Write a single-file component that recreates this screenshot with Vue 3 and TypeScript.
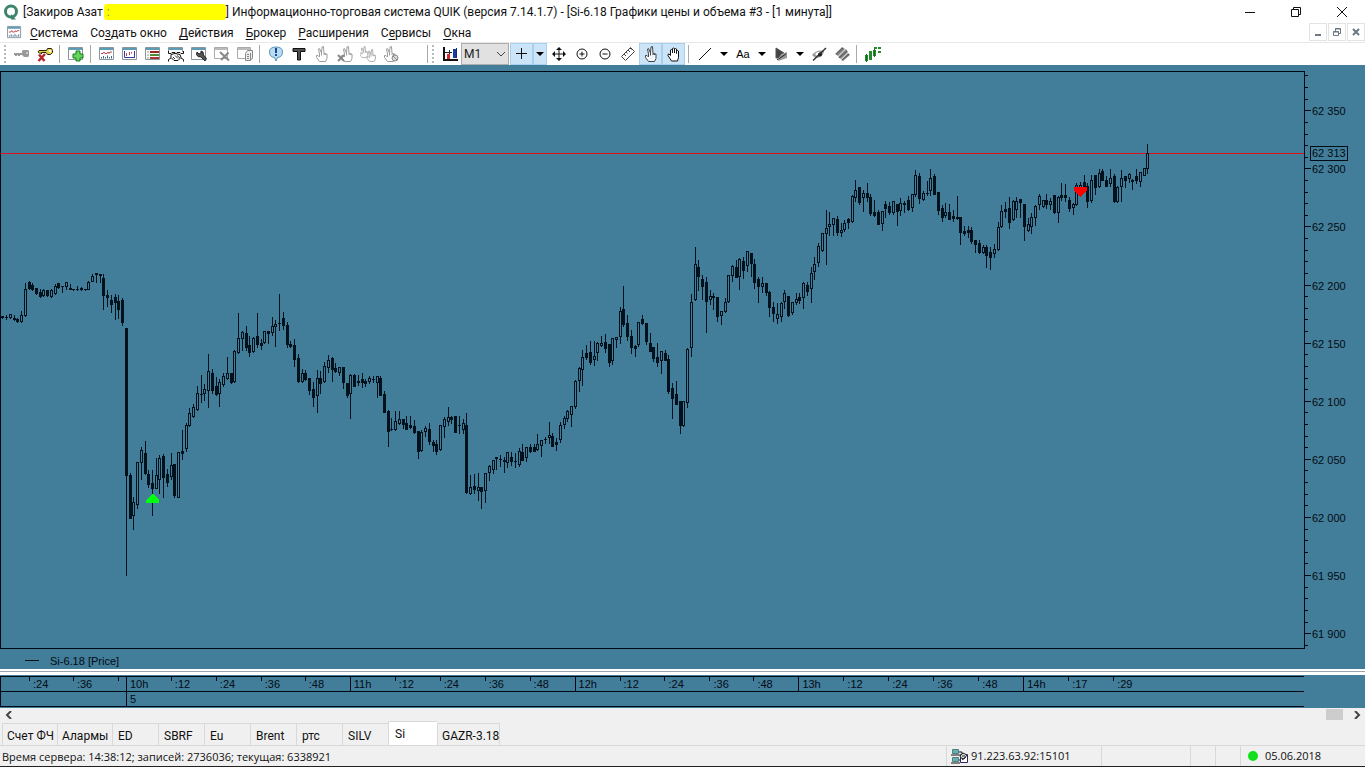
<script setup lang="ts">
import { ref } from 'vue'

interface MenuItem { before: string; key: string; after: string }
interface ToolItem { kind: 'button' | 'arrow' | 'sep' | 'grip' | 'select' | 'space'; icon?: string; label?: string; on?: boolean }

const menu: MenuItem[] = [
  { before: '', key: 'С', after: 'истема' },
  { before: 'Со', key: 'з', after: 'дать окно' },
  { before: '', key: 'Д', after: 'ействия' },
  { before: '', key: 'Б', after: 'рокер' },
  { before: '', key: 'Р', after: 'асширения' },
  { before: 'С', key: 'е', after: 'рвисы' },
  { before: '', key: 'О', after: 'кна' },
]

const hand = '<path d="M5.500 15.500L2.500 11.500V9.500H4L5.500 11V8L4.500 3L5.500 2.500L7.500 7L8 1L9.500 .5L10 7.500V9M10 7.500H11.500V9M11.500 8H13V12.500L11.500 15.500H5.500M7.500 7V9.500"/>'
const frame = '<path d="M.5 1.500H14.500V13.500H.5Z" fill="#fff" stroke="#8896a0"/><path d="M1 2H14V4H1Z" fill="#5c9db5"/>'
const greyFrame = '<path d="M.5 1.500H13.500V12.500H.5Z" fill="#fff" stroke="#aaa"/><path d="M1 2H13V4H1Z" fill="#bbb"/>'
const quoteIcon = frame + '<path d="M2 7.500H4L5 6L6 7.500H8L9 6L10 7.500L11 6H13" fill="none" stroke="#b4434c"/><path d="M2.500 12.500V11M4.500 12.500V10M6.500 12.500V11M8.500 12.500V9.500M10.500 12.500V11M12.500 12.500V10" fill="none" stroke="#41678a"/>'

const icons: Record<string, string> = {
  key: '<path d="M9 4H14L15 5V10L14 11H10L8 9H6V10H4V9H3V10H1V9H0V7H8V5Z" fill="#9a9a9a"/><path d="M12 6H14V8H12Z" fill="#c8c8c8"/>',
  keyOff: '<g stroke="#282400" stroke-width="1" fill="#e6d24c"><path d="M10.500 2.500H14.500L15.500 4.500V6.500L13.500 8.500H10.500L9 6.500H4.500V8L3.500 7H2.500L1 6L2 4.500H9.500Z"/></g><path d="M12 4H14V6H12Z" fill="#fff"/><path d="M2 8.500L7.500 15M8 8L1.500 15" stroke="#b7242b" stroke-width="2.500"/>',
  add: frame + '<path d="M8 5H12V8H15V12H12V15H8V12H5V8H8Z" fill="#65d45a" stroke="#147c1b"/>',
  quote: quoteIcon,
  chart: frame + '<path d="M2.500 5V11.500H13M12.500 11V5" stroke="#3838a4" fill="none"/><path d="M4.500 7V10M7.500 6V9M9.500 7.500V6" stroke="#bd4058"/>',
  table: frame + '<path d="M5 5H14V7H5Z" fill="#9c2620"/><path d="M5 8H14V10H5Z" fill="#4c8d34"/><path d="M5 11H14V13H5Z" fill="#a53730"/><path d="M2 6H4M2 9H4M2 12H4" stroke="#999"/>',
  deal: '<path d="M.5 6V1.500H14.500V6" fill="#fff" stroke="#8896a0"/><path d="M1 2H14V4H1Z" fill="#5c9db5"/><path d="M.5 5V7.500H3L4 6.500H7L8 7.500L9 6.500H12L13 7.500H15.500V5M.5 15.500V13.500L3 12M15.500 15.500V13.500L13 12" stroke="#111" fill="none"/><path d="M3 8.500L7 7.500L12 8.500L13 11.500L10 14.500H6L3 11.500Z" fill="#fff" stroke="#111"/><path d="M5 11L7 13M7 9.500L10 12.500M9 9.500L12 12" stroke="#333"/>',
  tool: frame + '<path d="M6 6L8 8L10 7V5L12 6L12.500 9L15.500 12.500L14 15L10 11L7 10.500L5.500 8.500Z" fill="#555" stroke="#222"/>',
  drop: greyFrame + '<path d="M6 6L15 14.500M14.500 6.500L7 14" stroke="#888" stroke-width="2"/>',
  copy: greyFrame + '<path d="M8.500 7.500L10.500 4.500H15.500V12L13.500 14.500H8.500Z" fill="#eee" stroke="#888"/><path d="M13.500 7V14M10 8.500H12M10 10.500H12M10 12.500H12" stroke="#888"/>',
  alert: '<path d="M8 1Q14.500 1 14.500 6T9.500 11.500L8 15L6.500 11.500Q1.500 11 1.500 6T8 1Z" fill="#b9dcf0" stroke="#5596b9"/><path d="M7 2H9V7H7ZM7 8H9V10H7Z" fill="#154a94"/>',
  text: '<path d="M2 2.500H14V5.500H9.500V14H6.500V5.500H2Z" fill="#4f4f4f" stroke="#111"/>',
  handGrey: '<g fill="#fff" stroke="#9c9c9c">' + hand + '</g>',
  handX: '<g fill="#fff" stroke="#9c9c9c"><g transform="translate(2)">' + hand + '</g></g><path d="M1 9L7 15M7 9L1 15" stroke="#888" stroke-width="2"/>',
  hands: '<g fill="#fff" stroke="#9c9c9c"><g transform="translate(-2 0) scale(.75)">' + hand + '</g><g transform="translate(5 3) scale(.8)">' + hand + '</g></g>',
  handNo: '<g fill="#fff" stroke="#9c9c9c"><g transform="translate(-1)">' + hand + '</g></g><circle cx="12" cy="12" r="3" fill="#ddd" stroke="#888"/><path d="M10 10L14 14" stroke="#888"/>',
  bars: '<path d="M2 1V15M1 14H16" stroke="#111" stroke-width="2"/><path d="M5 8H8V13H5Z" fill="#d4262b"/><path d="M3 6.500H10M7.500 4V8" stroke="#222"/><path d="M11 3H14V12H11Z" fill="#1b3ca8"/><path d="M14.500 2V12" stroke="#112a80"/>',
  cross: '<path d="M2 7.500H13M7.500 2V13" stroke="#111"/>',
  move: '<path d="M3 8H13M8 3V13" stroke="#111" stroke-width="1"/><path d="M8 1L11 4H5ZM8 15L11 12H5ZM1 8L4 5V11ZM15 8L12 5V11Z" fill="#111"/>',
  plus: '<circle cx="8" cy="8" r="5" fill="#fff" stroke="#111"/><path d="M5.500 8H10.500M8 5.500V10.500" stroke="#111"/>',
  minus: '<circle cx="8" cy="8" r="5" fill="#fff" stroke="#111"/><path d="M5.500 8H10.500" stroke="#111"/>',
  ruler: '<path d="M1.500 10.500L10.500 1.500L14.500 5.500L5.500 14.500Z" fill="#fff" stroke="#444"/><path d="M4 8L6 10M6 6L7.500 7.500M8 4L10 6M10 2L11.500 3.500" stroke="#444"/>',
  handPoint: '<g fill="#f4f9fc" stroke="#444">' + hand + '</g>',
  handOpen: '<path d="M5.500 15L2 9.500Q1.500 8 3 8L4.500 9.500V4Q5.500 3 6.500 4V7V2.500Q7.500 1.500 8.500 2.500V7V3Q9.500 2 10.500 3V7.500V5Q11.500 4 12.500 5V11.500L11.500 15Z" fill="#fff" stroke="#111"/>',
  line: '<path d="M2 14L14 2" stroke="#111"/>',
  letters: '<text x="8" y="12" text-anchor="middle" font-family="Liberation Sans, sans-serif" font-size="11" fill="#000">Aa</text>',
  shape: '<path d="M3 2L11 7L5 12H3Z" fill="#444" stroke="#555"/><path d="M8 8L14 6V12L5 15Z" fill="#999"/><path d="M4 14L13 8" stroke="#222"/>',
  eye: '<path d="M1 9Q6 3 13 5Q12 12 5 12Q3 11 1 9Z" fill="#999"/><path d="M4 8Q7 5 9 6L6 10Z" fill="#fff"/><path d="M2 14.500L15 2" stroke="#333" stroke-width="1.500"/><circle cx="9" cy="8.500" r="2" fill="#222"/>',
  layers: '<path d="M1 8L8 1L11 3L4 10ZM4 11L12 3L14 6L7 13ZM7 14L14 7L16 9L9 15Z" fill="#858585"/><path d="M2 8L9 2M5 12L13 5M8 14L15 8" stroke="#555"/>',
  green: '<path d="M0 9H3V15H0ZM4 5H7V14H4ZM8 4H11V10H8ZM9 1H12V3H9ZM13 1H16V3H13ZM13 5H16V7H13Z" fill="#238b2b"/><path d="M1.500 8V16M9.500 3V11" stroke="#126b1a"/>',
}

const b = (icon: string, label: string, on = false): ToolItem => ({ kind: 'button', icon, label, on })
const sep: ToolItem = { kind: 'sep' }
const tools: ToolItem[] = [
  { kind: 'grip' }, b('key', 'Подключить'), b('keyOff', 'Отключить'), sep, b('add', 'Создать окно'), sep,
  b('quote', 'Котировки'), b('chart', 'График'), b('table', 'Стакан'), b('deal', 'Сделки'), b('tool', 'Настройка'), b('drop', 'Удалить'), b('copy', 'Копировать'), sep,
  b('alert', 'Сообщение'), b('text', 'Заявка'), b('handGrey', 'Стоп-заявка'), b('handX', 'Снять заявку'), b('hands', 'Снять все'), b('handNo', 'Условие'),
  { kind: 'space' }, sep, { kind: 'grip' }, b('bars', 'Тип графика'), { kind: 'select' },
  b('cross', 'Перекрестие', true), { kind: 'arrow', label: 'Вид курсора', on: true },
  b('move', 'Переместить'), b('plus', 'Увеличить'), b('minus', 'Уменьшить'), b('ruler', 'Измерить'), b('handPoint', 'Указать', true), b('handOpen', 'Прокрутка', true), sep,
  b('line', 'Линия'), { kind: 'arrow', label: 'Виды линий' }, b('letters', 'Надпись'), { kind: 'arrow', label: 'Виды надписей' }, b('shape', 'Фигура'), { kind: 'arrow', label: 'Виды фигур' },
  b('eye', 'Скрыть'), b('layers', 'Удалить линии'), sep, b('green', 'Индикатор'),
]
const interval = ref('M1')

// One minute per entry: high, open, close, low, on the vertical scale of the plot.
const quotes = `
316 316 317 318|315 317 317 319|314 317 314 318|315 318 319 320|318 319 321 322|311 321 315 322|283 315 289 316|281 282 288 289|283 285 289 290|288 288 293 294
289 292 296 297|289 295 290 296|290 290 295 296|289 296 290 297|284 293 286 294|283 283 287 288|286 286 286 292|282 286 282 289|284 288 289 289|289 289 289 290
286 289 289 290|287 288 289 290|289 289 289 290|281 289 282 289|274 281 276 281|273 273 274 282|274 274 275 282|274 278 295 309|290 295 297 306|295 300 304 312
294 297 302 319|295 301 309 318|298 300 322 325
328 328 475 575|473 475 518 518|497 515 502 529|462 504 462 508|447 462 450 479|441 453 473 474|470 474 484 487|470 483 488 515|458 488 475 488|455 479 458 493
454 456 477 497|469 474 482 486|453 476 465 479|464 464 495 497|452 497 452 497|430 451 453 459|423 448 425 451|408 425 413 426|404 416 407 417|386 409 393 410
375 394 394 402|384 393 389 400|354 390 371 407|369 373 390 393|377 386 394 395|379 393 382 406|373 384 376 386|357 378 373 379|373 373 382 383|350 381 351 382
313 352 338 353|331 338 332 350|326 333 347 350|336 345 352 356|337 351 338 352|313 336 344 347|339 343 345 349|331 342 331 343|331 331 333 343|317 332 326 335
320 326 324 346|294 323 323 330|312 318 325 329|322 325 344 347|341 344 346 347|339 345 359 366|354 358 381 382|369 381 373 382|370 373 379 380|378 378 390 394
382 389 397 406|370 395 378 412|371 378 383 393|362 381 366 382|355 367 360 372|357 358 369 381|363 368 371 372|367 372 367 375|367 367 382 388|383 383 395 397
374 393 375 418|374 375 386 386|375 381 382 385|373 379 382 387|379 381 383 386|376 381 378 383|376 379 379 382|376 382 376 397|376 378 395 395|391 394 412 412
410 411 431 446|418 429 429 430|411 429 421 430|411 423 419 424|419 419 424 428|416 423 429 429|416 425 427 428|420 426 432 433|431 431 451 458|430 450 432 451
426 431 428 436|423 429 441 444|440 442 445 451|440 444 451 454|425 449 425 450|417 426 419 437|407 421 417 425|416 417 419 423|416 416 432 432|416 425 425 433
419 429 423 433|413 425 492 493|475 493 487 494|474 486 489 493|473 490 487 500|487 487 491 508|473 490 473 502|465 472 466 480|460 469 460 473|457 457 458 469
455 459 459 466|457 460 461 472|452 462 452 467|452 457 461 465|453 461 461 467|448 464 451 466|444 452 460 460|447 457 447 461|444 447 451 452|444 447 451 451
434 449 444 450|440 445 440 456|437 439 439 443|422 437 435 443|433 436 446 446|438 442 444 450|422 439 425 442|416 424 418 428|410 418 411 421|406 414 406 426
380 406 381 408|367 380 368 391|350 369 357 385|345 353 357 359|341 352 362 364|341 359 356 365|342 352 343 360|336 345 343 346|334 342 348 352|344 344 362 366
338 360 338 364|337 339 337 347|307 336 311 343|286 309 324 326|315 323 336 340|330 336 347 353|345 346 348 356|322 344 322 346|315 319 323 324|323 323 341 344
333 343 351 351|347 347 358 361|343 357 362 366|351 360 351 373|350 353 360 360|355 359 391 393|383 388 398 418|381 394 404 404|401 401 425 433|401 425 401 426
348 402 349 407|294 347 302 356|247 299 264 300|260 267 276 290|275 279 286 299|277 282 301 332|290 299 296 304|293 296 297 309|297 297 316 321|311 315 311 324
298 311 302 312|275 301 275 302|265 275 266 281|260 267 277 277|258 276 259 289|257 261 270 278|251 265 251 271|253 253 263 276|259 264 282 288|277 279 286 302
277 286 283 292|283 283 292 295|291 292 307 316|302 307 313 321|303 318 314 323|302 316 303 321|290 301 293 308|296 296 315 316|302 312 302 314|293 302 299 304
293 297 300 303|282 297 283 308|282 285 291 295|267 288 273 302|257 271 264 279|243 262 246 266|233 250 233 251|210 233 228 264|212 226 224 235|218 224 218 235
216 219 232 235|223 232 230 236|220 229 223 231|218 219 222 228|195 221 196 222|180 197 190 201|187 187 202 204|190 197 193 211|183 193 197 201|194 197 213 215
200 212 215 216|210 212 224 224|211 223 211 230|201 204 208 217|202 206 212 214|201 212 201 214|204 204 211 225|198 210 203 215|201 203 204 212|196 200 209 210
194 207 194 211|170 194 175 196|173 176 198 203|191 199 193 200|181 193 193 195|169 190 178 195|174 176 194 194|192 192 210 214|205 208 217 221|203 215 212 217
204 212 219 219|210 216 218 221|196 217 218 219|217 217 232 244|226 231 233 235|226 230 232 237|227 230 241 243|240 240 244 252|240 243 252 253|245 252 247 253
245 247 255 267|247 252 257 269|244 253 249 257|222 249 227 250|205 226 211 227|202 209 211 217|197 208 222 228|200 219 201 220|197 209 201 217|199 199 202 217
204 204 226 240|218 230 224 231|213 226 217 233|205 217 206 225|194 204 196 209|200 206 200 207|194 200 204 208|198 204 201 209|195 195 212 213|196 212 197 222
183 195 197 200|184 195 197 201|197 200 208 211|203 207 204 214|183 204 185 205|182 190 185 192|175 182 187 188|183 186 201 207|175 200 180 202|175 175 187 194
169 186 173 187|169 171 180 180|176 180 186 186|169 183 178 186|174 176 201 202|186 201 187 202|170 186 178 201|176 176 180 187|173 178 174 182|179 180 181 189
169 176 180 183|172 181 172 186|168 175 168 175|144 168 153 173`

const PLOT_TOP = 71
const PLOT_HEIGHT = 578
const PLOT_WIDTH = 1305
const OPENING = 33
const minuteX = (i: number): number => Math.floor(126.3 + i * 3.742)

const candles = quotes.trim().split(/[|\n]/).map((row, n) => {
  const [high, open, close, low] = row.trim().split(' ').map(Number)
  const top = Math.min(open, close)
  return { x: minuteX(n - OPENING), high, wick: low - high + 1, top, body: Math.abs(open - close) + 1, rising: close < open }
})
const hollow = candles.filter(c => c.rising && c.body > 2)

const priceY = (p: number): number => Math.round(168.4 + (62300 - p) * 1.1618)
const percentY = (p: number): string => ((priceY(p) - PLOT_TOP) / PLOT_HEIGHT * 100) + '%'
const prices = [62350, 62300, 62250, 62200, 62150, 62100, 62050, 62000, 61950, 61900]
const ticks = Array.from({ length: 50 }, (_, i) => 62380 - i * 10).filter(p => p >= 61890)
const spaced = (p: number): string => String(p).replace(/(\d{2})(\d{3})/, '$1 $2')

const times = [
  [-26, ':24'], [-14, ':36'], [-2, ''], [0, '10h'], [12, ':12'], [24, ':24'], [36, ':36'], [48, ':48'],
  [60, '11h'], [72, ':12'], [84, ':24'], [96, ':36'], [108, ':48'], [120, '12h'], [132, ':12'], [144, ':24'], [156, ':36'], [168, ':48'],
  [180, '13h'], [192, ':12'], [204, ':24'], [216, ':36'], [228, ':48'], [240, '14h'], [252, ':17'], [264, ':29'],
].map(([i, label]) => ({ left: (minuteX(i as number) / (PLOT_WIDTH - 1) * 100) + '%', label: label as string, hour: String(label).endsWith('h') }))
const dayLeft = (126 / (PLOT_WIDTH - 1) * 100) + '%'

const tabs = ['Счет ФЧ', 'Алармы', 'ED', 'SBRF', 'Eu', 'Brent', 'ртс', 'SILV', 'Si', 'GAZR-3.18']
const activeTab = ref('Si')
</script>

<template>
  <div class="window">
    <header class="title">
      <svg class="logo" viewBox="0 0 16 16"><circle cx="8" cy="7.500" r="5.500" fill="none" stroke="#3d846b" stroke-width="3" /><path d="M8 10L13 15.500H8Z" fill="#3d846b" /></svg>
      <span>[Закиров Азат</span><span class="marker">:</span><span>] Информационно-торговая система QUIK (версия 7.14.1.7) - [Si-6.18 Графики цены и объема #3 - [1 минута]]</span>
      <div class="caption">
        <button aria-label="Свернуть"><svg viewBox="0 0 12 12"><path d="M1 6.500H11" /></svg></button>
        <button aria-label="Восстановить"><svg viewBox="0 0 12 12"><path d="M1.500 3.500H8.500V10.500H1.500ZM3.500 3V1.500H10.500V8.500H9" /></svg></button>
        <button aria-label="Закрыть"><svg viewBox="0 0 12 12"><path d="M1 1L11 11M11 1L1 11" /></svg></button>
      </div>
    </header>

    <nav class="menu">
      <svg class="doc" viewBox="0 0 16 16" v-html="icons.quote" />
      <button v-for="m in menu" :key="m.key" class="item">{{ m.before }}<u>{{ m.key }}</u>{{ m.after }}</button>
      <div class="child">
        <button aria-label="Свернуть окно"><svg viewBox="0 0 12 12"><path d="M3 9H9" stroke-width="2" /></svg></button>
        <button aria-label="Восстановить окно"><svg viewBox="0 0 12 12"><path d="M2.500 5.500H7.500V9.500H2.500ZM2 6H8M4.500 5V2.500H9.500V7.500H8M4 3H10" /></svg></button>
        <button aria-label="Закрыть окно"><svg viewBox="0 0 12 12"><path d="M3 3L9 9M9 3L3 9" stroke-width="2" /></svg></button>
      </div>
    </nav>

    <div class="toolbar">
      <template v-for="(t, n) in tools" :key="n">
        <i v-if="t.kind === 'sep'" class="sep"></i>
        <i v-else-if="t.kind === 'grip'" class="grip"></i>
        <i v-else-if="t.kind === 'space'" class="space"></i>
        <label v-else-if="t.kind === 'select'" class="interval">
          <select v-model="interval" aria-label="Интервал"><option>M1</option><option>M5</option><option>M15</option></select>
          <svg viewBox="0 0 10 10"><path d="M1 3L5 7L9 3" fill="none" stroke="#444" /></svg>
        </label>
        <button v-else-if="t.kind === 'arrow'" class="arrow" :class="{ on: t.on }" :aria-label="t.label"><svg viewBox="0 0 8 4"><path d="M0 0H8L4 4Z" /></svg></button>
        <button v-else class="tool" :class="{ on: t.on }" :aria-label="t.label"><svg viewBox="0 0 16 16" v-html="icons[t.icon!]" /></button>
      </template>
    </div>

    <main class="chart">
      <svg class="plot" viewBox="0 71 1305 578" preserveAspectRatio="none" shape-rendering="crispEdges" role="img" aria-label="Si-6.18">
        <path d="M1 153H1304V154H1Z" fill="#e0101c" />
        <g fill="#02121c">
          <template v-for="c in candles" :key="c.x">
            <rect :x="c.x" :y="c.high" width="1" :height="c.wick" />
            <rect :x="c.x - 1" :y="c.top" width="3" :height="c.body" />
          </template>
        </g>
        <g fill="#427d99"><rect v-for="c in hollow" :key="c.x" :x="c.x" :y="c.top + 1" width="1" :height="c.body - 2" /></g>
        <path d="M152 494H153L159 500V503H146V500Z" fill="#0f1" />
        <path d="M1074 187H1087V190L1081 197H1080L1074 190Z" fill="#f00" />
        <path d="M0 71H1305V649H0ZM1 72V648H1304V72Z" fill="#000814" fill-rule="evenodd" />
      </svg>
      <div class="scale">
        <svg viewBox="0 71 60 578" preserveAspectRatio="none" shape-rendering="crispEdges">
          <rect v-for="p in ticks" :key="p" x="0" :y="priceY(p)" :width="p % 50 ? 3 : 6" height="1" fill="#000814" />
        </svg>
        <span v-for="p in prices" :key="p" class="price" :style="{ top: percentY(p) }">{{ spaced(p) }}</span>
        <span class="price last" :style="{ top: percentY(62313) }">62 313</span>
      </div>
      <div class="legend"><i></i>Si-6.18 [Price]</div>
    </main>

    <div class="splitter"></div>

    <section class="timeline">
      <div class="times">
        <span v-for="(t, n) in times" :key="n" class="time" :class="{ hour: t.hour }" :style="{ left: t.left }">{{ t.label }}</span>
      </div>
      <div class="days"><span class="time hour" :style="{ left: dayLeft }">5</span></div>
    </section>

    <div class="scroll">
      <button aria-label="Влево"><svg viewBox="0 0 8 8"><path d="M6 0L2 4L6 8" /></svg></button>
      <div class="track"><i class="thumb"></i></div>
      <button aria-label="Вправо"><svg viewBox="0 0 8 8"><path d="M2 0L6 4L2 8" /></svg></button>
    </div>

    <div class="tabs" role="tablist">
      <button v-for="t in tabs" :key="t" role="tab" :aria-selected="t === activeTab" :class="{ active: t === activeTab, wide: t.length > 5, long: t.length > 8 }" @click="activeTab = t">{{ t }}</button>
    </div>

    <footer class="status">
      <span class="server">Время сервера: 14:38:12; записей: 2736036; текущая: 6338921</span>
      <span class="address">
        <svg viewBox="0 0 18 16"><path d="M1.500 1.500H7.500V5.500H1.500ZM1.500 9.500H7.500V13.500H1.500Z" fill="#5cb4b4" stroke="#5b7a80" /><path d="M0 7H9M0 15H9M8 4H11V7M8 12H10" stroke="#111" fill="none" /><path d="M9.500 6.500H16.500V14.500H9.500Z" fill="#fff" stroke="#262660" /><path d="M9 8L12 5L16 7L13 11L10 10Z" fill="#ddd" stroke="#222" /><path d="M11 8H14M11 12L15 9" stroke="#222" /></svg>
        91.223.63.92:15101
      </span>
      <span class="blank"></span><span class="small"></span><span class="small"></span>
      <span class="date"><i></i>05.06.2018</span>
    </footer>
  </div>
</template>

<style>
body { margin: 0; background: #fff; }
</style>

<style scoped>
.window { display: flex; flex-direction: column; height: 100vh; min-height: 400px; overflow: hidden; background: #fff; color: #111; font: 12px/16px Roboto, "Noto Sans", sans-serif; }
button { border: 0; padding: 0; background: none; color: inherit; font: inherit; }
svg { display: block; }
.title { display: flex; align-items: center; flex: none; height: 22px; padding-top: 1px; box-sizing: border-box; white-space: nowrap; }
.logo { width: 16px; height: 16px; margin: 0 4px 0 3px; }
.marker { width: 122px; height: 16px; margin-left: 1px; padding-left: 3px; border-radius: 3px; background: #ff0; color: #886; box-sizing: border-box; }
.caption { display: flex; margin-left: auto; }
.caption button { display: grid; place-items: center; width: 46px; height: 20px; }
.caption svg, .child svg { width: 12px; height: 12px; fill: none; stroke: #111; }
.menu { display: flex; align-items: center; flex: none; height: 20px; white-space: nowrap; }
.doc { width: 15px; height: 15px; margin: 0 2px 0 7px; }
.item { padding: 2px 6px 0; }
.item u { text-underline-offset: 2px; }
.child { display: flex; gap: 1px; margin-left: auto; }
.child button { display: grid; place-items: center; width: 18px; height: 18px; border: 1px solid #e3e3e3; }
.child svg { stroke: #6c7883; }
.toolbar { display: flex; align-items: center; flex: none; box-sizing: border-box; height: 23px; border-top: 1px solid #e8e8e8; background: #fff; }
.tool { display: grid; flex: none; place-items: center; width: 23px; height: 22px; }
.tool svg { width: 16px; height: 16px; }
.on { background: #cce4f7; box-shadow: inset 0 0 0 1px #a6d0ee; }
.arrow { display: grid; flex: none; place-items: center; width: 15px; height: 22px; }
.arrow.on { width: 14px; }
.arrow svg { width: 8px; height: 4px; }
.sep { flex: none; width: 1px; height: 18px; margin: 0 4px 0 3px; background: #a9a9a9; }
.grip { flex: none; width: 2px; height: 18px; margin: 0 4px; background: repeating-linear-gradient(#bbb 0 2px, #fff 2px 4px); }
.sep + .grip { margin-left: 0; }
.space { flex: none; width: 22px; }
.interval { position: relative; flex: none; width: 48px; height: 22px; padding-right: 1px; }
.interval select { appearance: none; box-sizing: border-box; width: 48px; height: 22px; border: 1px solid #adadad; border-radius: 0; padding: 0 2px; background: #e1e1e1; color: #222; font: inherit; }
.interval svg { position: absolute; right: 4px; top: 6px; width: 10px; height: 10px; pointer-events: none; }
.chart { display: grid; flex: 1; grid-template: minmax(0, 1fr) 20px / minmax(0, 1fr) 60px; min-height: 0; padding-top: 6px; background: #427d99; color: #020c14; font: 11px/14px "Liberation Sans", Arial, sans-serif; }
.plot { width: 100%; height: 100%; min-height: 0; }
.scale { position: relative; min-height: 0; }
.scale svg { width: 60px; height: 100%; }
.price { position: absolute; left: 7px; margin-top: -6px; white-space: nowrap; }
.last { left: 5px; padding: 0 1px; margin-top: -7px; border: 1px solid #020c14; line-height: 13px; background: #427d99; }
.legend { display: flex; align-items: center; grid-column: 1 / -1; gap: 11px; padding: 3px 25px 0; }
.legend i { width: 14px; height: 1px; background: #020c14; }
.splitter { flex: none; height: 6px; box-sizing: border-box; border: 2px solid #fff; border-width: 2px 0 3px; background: #9aa2b0; }
.timeline { flex: none; height: 33px; box-sizing: border-box; padding: 1px 61px 1px 0; background: #427d99; color: #020c14; font: 11px/14px "Liberation Sans", Arial, sans-serif; }
.times, .days { position: relative; box-sizing: border-box; height: 15px; border: 1px solid #000814; border-width: 1px 0 0 1px; }
.days { height: 16px; border-bottom-width: 1px; }
.time { position: absolute; top: 0; height: 14px; padding-left: 3px; }
.time::before { content: ""; position: absolute; left: -1px; top: 0; width: 1px; height: 4px; background: #000814; }
.hour { padding-left: 3px; }
.hour::before { height: 14px; }
.scroll { display: flex; flex: none; height: 14px; background: #f0f0f0; }
.scroll button { display: grid; place-items: center; width: 17px; height: 14px; }
.scroll svg { width: 8px; height: 8px; fill: none; stroke: #444; stroke-width: 2px; }
.track { display: flex; flex: 1; justify-content: flex-end; padding: 1px 5px 2px 0; }
.thumb { width: 17px; background: #cdcdcd; }
.tabs { display: flex; align-items: flex-end; flex: none; box-sizing: border-box; height: 24px; padding-left: 2px; border-bottom: 1px solid #d9d9d9; background: #f0f0f0; }
.tabs button { box-sizing: border-box; width: 46px; height: 22px; padding: 2px 0 0 5px; border: 1px solid #d9d9d9; border-width: 1px 0 0 1px; text-align: left; white-space: nowrap; }
.tabs .wide { width: 55px; padding-left: 4px; }
.tabs .long { width: 63px; border-right-width: 1px; }
.tabs .active { width: 49px; height: 24px; padding: 0 0 0 6px; background: #fff; }
.status { display: flex; flex: none; box-sizing: border-box; height: 21px; border-bottom: 1px solid #222; background: #f0f0f0; font: 11px/22px "Open Sans", "Noto Sans", sans-serif; white-space: nowrap; }
.status > span { box-sizing: border-box; border-left: 1px solid #d9d9d9; }
.status .server { flex: 1; padding-left: 2px; border: 0; }
.address { display: flex; align-items: center; gap: 2px; width: 155px; padding-left: 4px; }
.address svg { width: 18px; height: 16px; }
.blank { width: 89px; }
.small { width: 25px; }
.date { display: flex; align-items: center; gap: 7px; width: 125px; padding-left: 7px; }
.date i { width: 10px; height: 10px; border-radius: 50%; background: #12e01c; }
</style>
